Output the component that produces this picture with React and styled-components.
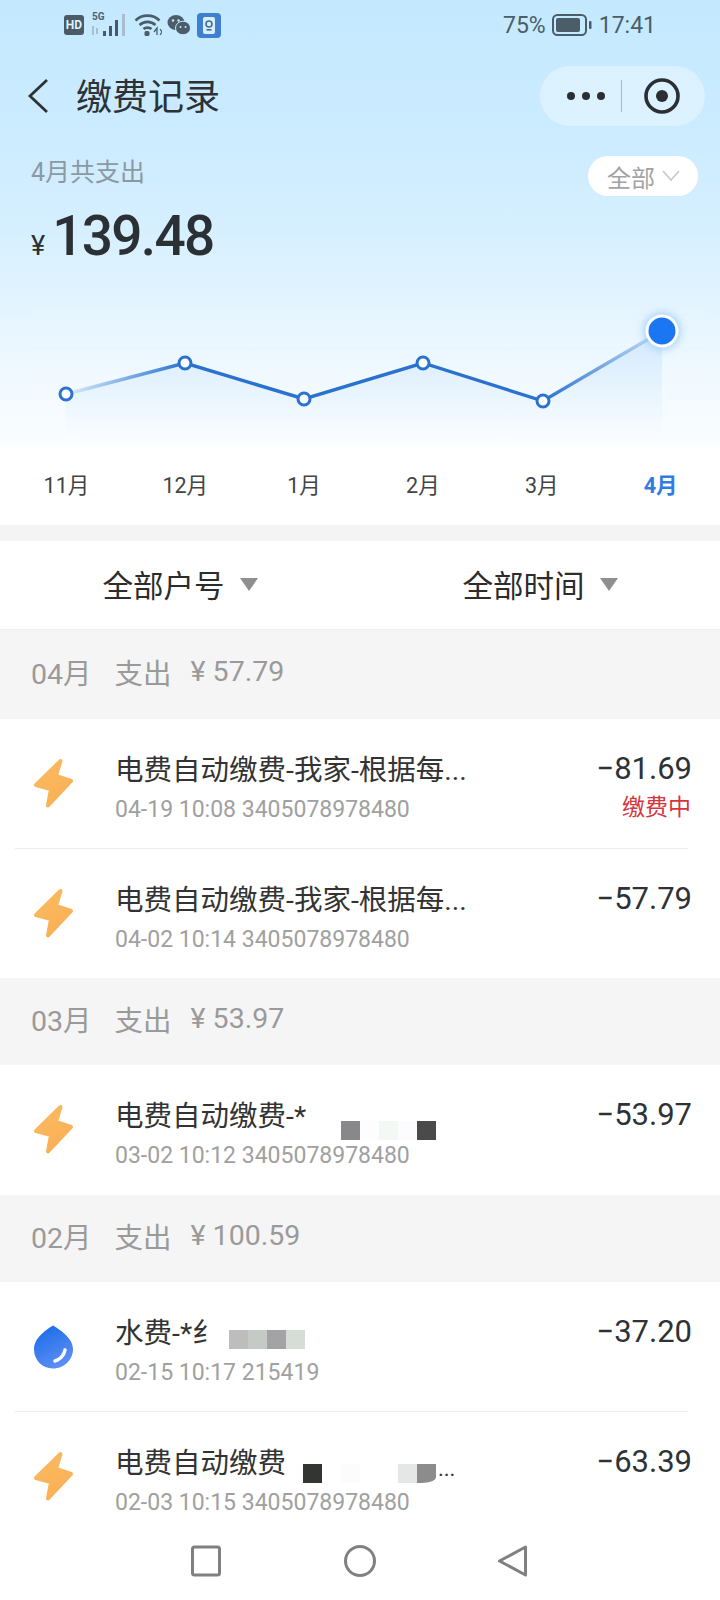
import styled, { createGlobalStyle } from "styled-components";

const GlobalStyle = createGlobalStyle`
  html, body {
    margin: 0;
    padding: 0;
    background: #fff;
  }
  * {
    box-sizing: border-box;
  }
`;

const FONT = `Roboto, "Noto Sans CJK SC", "Liberation Sans", sans-serif`;

const Page = styled.div`
  width: 720px;
  height: 1600px;
  overflow: hidden;
  display: flex;
  flex-direction: column;
  font-family: ${FONT};
  background: #fff;
`;
const Hero = styled.div`
  height: 447px;
  flex: none;
  background: linear-gradient(
    180deg,
    #c4e9ff 0%,
    #cbebff 28%,
    #d5efff 50%,
    #e3f4ff 68%,
    #f3faff 88%,
    #fbfdff 100%
  );
`;
const StatusBar = styled.div`
  height: 50px;
  display: flex;
  align-items: center;
  padding: 0 64px 0 64px;
  color: #4b5d69;
`;
const StatusIcons = styled.div`
  display: flex;
  align-items: center;
`;
const HdBadge = styled.div`
  width: 20px;
  height: 20px;
  border-radius: 3px;
  background: #4a5a66;
  color: #dff2ff;
  font-size: 12px;
  font-weight: 700;
  line-height: 20px;
  text-align: center;
`;
const Signal = styled.div`
  position: relative;
  width: 36px;
  height: 26px;
  margin-left: 8px;
`;
const FiveG = styled.span`
  position: absolute;
  left: 0;
  top: -1px;
  font-size: 10px;
  font-weight: 700;
  line-height: 12px;
  color: #4f6170;
`;
const StatusRight = styled.div`
  margin-left: auto;
  display: flex;
  align-items: center;
  gap: 6px;
  font-size: 23px;
`;
const TopBar = styled.div`
  height: 92px;
  display: flex;
  align-items: center;
  padding: 0 15px 0 27px;
`;
const PageTitle = styled.h1`
  margin: 0 0 4px 27px;
  font-size: 36px;
  font-weight: 400;
  color: #2c3237;
`;
const Capsule = styled.div`
  margin-left: auto;
  width: 165px;
  height: 60px;
  border-radius: 30px;
  background: rgba(255, 255, 255, 0.34);
  display: flex;
  align-items: center;
  padding-left: 27px;
`;
const Dots = styled.div`
  display: flex;
  gap: 7px;
`;
const Dot = styled.i`
  width: 8px;
  height: 8px;
  border-radius: 50%;
  background: #2b2f33;
`;
const CapsuleLine = styled.div`
  width: 1px;
  height: 32px;
  margin: 0 22px 0 16px;
  background: #a9bac5;
`;
const SummaryRow = styled.div`
  height: 54px;
  padding: 14px 22px 0 31px;
  display: flex;
  justify-content: space-between;
`;
const SummaryLabel = styled.div`
  font-size: 25px;
  line-height: 34px;
  color: #8c99a3;
`;
const FilterPill = styled.div`
  width: 110px;
  height: 40px;
  border-radius: 20px;
  background: #fff;
  display: flex;
  align-items: center;
  padding-left: 19px;
  gap: 7px;
  font-size: 24px;
  color: #a3a3a3;
`;
const Total = styled.div`
  height: 66px;
  padding: 13px 0 0 31px;
  display: flex;
  align-items: baseline;
  color: #2b3035;
`;
const Yen = styled.span`
  font-size: 27px;
  font-weight: 400;
  margin-right: 7px;
`;
const TotalValue = styled.span`
  font-size: 55px;
  line-height: 54px;
  font-weight: 500;
  letter-spacing: -1.7px;
`;
const Chart = styled.svg`
  display: block;
  width: 720px;
  height: 185px;
`;
const Months = styled.div`
  height: 78px;
  flex: none;
  display: flex;
  align-items: center;
  padding: 0 0 6px 7px;
`;
const Month = styled.div`
  width: 119px;
  text-align: center;
  font-size: 21.5px;
  font-weight: ${(p) => (p.$active ? 700 : 400)};
  color: ${(p) => (p.$active ? "#2f7de1" : "#444")};
`;
const Band = styled.div`
  height: 16px;
  flex: none;
  background: #f4f4f4;
`;
const Filters = styled.div`
  height: 89px;
  flex: none;
  display: grid;
  grid-template-columns: 1fr 1fr;
  border-bottom: 1px solid #eee;
`;
const FilterItem = styled.div`
  display: flex;
  align-items: center;
  justify-content: center;
  gap: 15px;
  padding-bottom: 2px;
  font-size: 30.5px;
  color: #2c2c2c;
`;
const Caret = styled.i`
  width: 0;
  height: 0;
  border-left: 9px solid transparent;
  border-right: 9px solid transparent;
  border-top: 13px solid #8f8f8f;
`;
const List = styled.div`
  flex: 1;
  min-height: 0;
  overflow: hidden;
`;
const MonthHeader = styled.div`
  height: ${(p) => p.$height}px;
  display: flex;
  align-items: center;
  padding: 0 0 6px 31px;
  background: #f5f5f5;
  color: #9a9a9a;
  font-size: 28.5px;
`;
const HeaderPart = styled.span`
  margin-right: ${(p) => p.$gap}px;
`;
const Row = styled.div`
  height: 129.5px;
  display: flex;
  padding: 0 28px 0 33px;
  position: relative;
  &::after {
    content: "";
    display: ${(p) => (p.$divider ? "block" : "none")};
    position: absolute;
    left: 15px;
    right: 32px;
    bottom: 0;
    height: 1px;
    background: #ececec;
  }
`;
const IconBox = styled.div`
  width: 41px;
  flex: none;
  padding-top: ${(p) => p.$top}px;
`;
const RowBody = styled.div`
  flex: 1;
  min-width: 0;
  padding: 32px 0 0 41px;
`;
const RowTitle = styled.div`
  display: flex;
  align-items: flex-end;
  height: 40px;
  font-size: 28.5px;
  line-height: 40px;
  color: #333;
  white-space: nowrap;
`;
const RowSub = styled.div`
  margin-top: 3px;
  font-size: 23px;
  line-height: 32px;
  color: #a0a0a0;
`;
const Mosaic = styled.div`
  display: flex;
  margin: 0 0 ${(p) => p.$lift}px ${(p) => p.$offset}px;
  & > i:last-child {
    border-bottom-right-radius: ${(p) => (p.$cut ? "14px 6px" : "0")};
  }
`;
const MosaicCell = styled.i`
  width: 19px;
  height: 19px;
  background: ${(p) => p.$color};
`;
const TrailingDots = styled.span`
  margin-left: 2px;
  font-size: 22px;
  line-height: 30px;
`;
const RowAmounts = styled.div`
  flex: none;
  padding-top: 28px;
  text-align: right;
`;
const Amount = styled.div`
  font-size: 31px;
  line-height: 44px;
  color: #2e3236;
`;
const Paying = styled.div`
  margin: 1px 1px 0 0;
  font-size: 23px;
  line-height: 32px;
  color: #d5353f;
`;
const NavBar = styled.div`
  height: 70px;
  flex: none;
  background: #fff;
  display: flex;
  align-items: flex-start;
  padding: 15px 0 0 191px;
`;
const NavIcon = styled.svg`
  display: block;
  margin-right: ${(p) => p.$gap}px;
`;

const points = [
  [66, 394],
  [185, 363],
  [304, 399],
  [423, 363],
  [543, 401],
];
const months = ["11月", "12月", "1月", "2月", "3月", "4月"];

const rows = {
  apr: [
    { id: 1, type: "bolt", title: "电费自动缴费-我家-根据每...", sub: "04-19 10:08 3405078978480", amount: "−81.69", paying: true, divider: true },
    { id: 2, type: "bolt", title: "电费自动缴费-我家-根据每...", sub: "04-02 10:14 3405078978480", amount: "−57.79" },
  ],
  mar: [
    {
      id: 3,
      type: "bolt",
      title: "电费自动缴费-*",
      sub: "03-02 10:12 3405078978480",
      amount: "−53.97",
      offset: 35,
      lift: -3,
      mosaic: ["#88878a", "#fdfdfd", "#f3f8f5", "#fcfbfd", "#4a4a4a"],
    },
  ],
  feb: [
    {
      id: 4,
      type: "drop",
      title: "水费-*纟",
      sub: "02-15 10:17 215419",
      amount: "−37.20",
      divider: true,
      offset: 8,
      lift: 5,
      mosaic: ["#bdbdbd", "#c6cac7", "#a3a2a4", "#d6dcd6"],
    },
    {
      id: 5,
      type: "bolt",
      title: "电费自动缴费",
      sub: "02-03 10:15 3405078978480",
      amount: "−63.39",
      offset: 17,
      lift: 1,
      mosaic: ["#333533", "#fff", "#fdfcfd", "#fff", "#fff", "#e4e7e5", "#8c8c8c"],
      more: true,
    },
  ],
};

function Bolt() {
  return (
    <svg width="41" height="50" viewBox="0 0 41 50">
      <defs>
        <linearGradient id="boltFill" x1="0" y1="0" x2="0.6" y2="1">
          <stop offset="0" stopColor="#f9bb62" />
          <stop offset="1" stopColor="#fbb055" />
        </linearGradient>
      </defs>
      <path
        d="M27.5 3 L3 27 L18 31 L15 47.5 L38 23 L23 18 Z"
        fill="url(#boltFill)"
        stroke="url(#boltFill)"
        strokeWidth="4"
        strokeLinejoin="round"
      />
    </svg>
  );
}

function Drop() {
  return (
    <svg width="41" height="44" viewBox="0 0 41 44">
      <defs>
        <linearGradient id="dropFill" x1="0.3" y1="0" x2="0.8" y2="1">
          <stop offset="0" stopColor="#1c6dea" />
          <stop offset="1" stopColor="#6491f6" />
        </linearGradient>
      </defs>
      <path
        d="M20 0.5 C24 3 40 12 40 24 C40 35 31 43.5 20 43.5 C9 43.5 1 35 1 24 C1 12 16 3 20 0.5 Z"
        fill="url(#dropFill)"
      />
      <path d="M22 36 C26 35 31 31 32 25" fill="none" stroke="#fff" strokeWidth="3.5" strokeLinecap="round" />
    </svg>
  );
}

function Section({ month, total, height, items }) {
  return (
    <>
      <MonthHeader $height={height}>
        <HeaderPart $gap={23}>{month}</HeaderPart>
        <HeaderPart $gap={19}>支出</HeaderPart>
        <span>¥ {total}</span>
      </MonthHeader>
      {items.map((item) => (
        <Row key={item.id} $divider={item.divider}>
          <IconBox $top={item.type === "bolt" ? 39 : 43}>{item.type === "bolt" ? <Bolt /> : <Drop />}</IconBox>
          <RowBody>
            <RowTitle>
              {item.title}
              {item.mosaic && (
                <Mosaic $offset={item.offset} $lift={item.lift} $cut={item.more}>
                  {item.mosaic.map((c, i) => (
                    <MosaicCell key={i} $color={c} />
                  ))}
                </Mosaic>
              )}
              {item.more && <TrailingDots>...</TrailingDots>}
            </RowTitle>
            <RowSub>{item.sub}</RowSub>
          </RowBody>
          <RowAmounts>
            <Amount>{item.amount}</Amount>
            {item.paying && <Paying>缴费中</Paying>}
          </RowAmounts>
        </Row>
      ))}
    </>
  );
}

export default function App() {
  return (
    <Page>
      <GlobalStyle />
      <Hero>
        <StatusBar>
          <StatusIcons>
            <HdBadge>HD</HdBadge>
            <Signal>
              <FiveG>5G</FiveG>
              <svg width="36" height="26" viewBox="0 0 36 26">
                <g fill="#a9bdca">
                  <rect x="0" y="14" width="2" height="9" />
                  <rect x="4" y="16" width="2" height="6" />
                  <rect x="30" y="2" width="3" height="22" />
                </g>
                <g fill="#46586a">
                  <rect x="11" y="19" width="3" height="5" />
                  <rect x="17" y="14" width="3" height="10" />
                  <rect x="23" y="8" width="3" height="16" />
                </g>
              </svg>
            </Signal>
            <svg width="28" height="24" viewBox="0 0 28 24" style={{ marginLeft: 6 }}>
              <g fill="none" stroke="#4b5d69" strokeWidth="2.6">
                <path d="M1.5 7.5 C8 1 19 1 25.5 7.5" />
                <path d="M5.5 12 C10 7.8 17 7.8 21.5 12" />
                <path d="M9.5 16 C11.5 14.2 15.5 14.2 17.5 16" />
              </g>
              <rect x="10.5" y="18" width="5" height="5" rx="1.5" fill="#4b5d69" />
              <path d="M20 19 L23 15 V22 M26 16 L28 19 L26 22" fill="none" stroke="#4b5d69" strokeWidth="1.3" />
            </svg>
            <svg width="24" height="22" viewBox="0 0 24 22" style={{ marginLeft: 5 }}>
              <ellipse cx="9" cy="8.5" rx="8.5" ry="7.5" fill="#4b5d69" />
              <ellipse cx="16" cy="14" rx="7.5" ry="6.8" fill="#4b5d69" stroke="#c6e9ff" strokeWidth="1" />
              <circle cx="6" cy="6.5" r="1.2" fill="#c6e9ff" />
              <circle cx="11.5" cy="6.5" r="1.2" fill="#c6e9ff" />
              <circle cx="13.5" cy="13" r="1" fill="#c6e9ff" />
              <circle cx="18.5" cy="13" r="1" fill="#c6e9ff" />
            </svg>
            <svg width="24" height="25" viewBox="0 0 24 25" style={{ marginLeft: 6 }}>
              <rect width="24" height="25" rx="4" fill="#3f7fd0" />
              <rect x="6" y="4" width="12" height="17" rx="2" fill="#dbeeff" />
              <circle cx="12" cy="11" r="3" fill="none" stroke="#3f6f9a" strokeWidth="1.6" />
              <rect x="9.5" y="16" width="5" height="1.6" fill="#3f6f9a" />
            </svg>
          </StatusIcons>
          <StatusRight>
            <span>75%</span>
            <svg width="41" height="22" viewBox="0 0 41 22">
              <rect x="1" y="1" width="33" height="20" rx="4.5" fill="none" stroke="#4b5d69" strokeWidth="2" />
              <rect x="4" y="4" width="24" height="14" rx="2" fill="#4b5d69" />
              <rect x="37" y="7" width="2.5" height="8" rx="1" fill="#4b5d69" />
            </svg>
            <span>17:41</span>
          </StatusRight>
        </StatusBar>
        <TopBar>
          <svg width="22" height="36" viewBox="0 0 22 36">
            <path d="M20 2 L3 18 L20 34" fill="none" stroke="#2c3237" strokeWidth="2.8" />
          </svg>
          <PageTitle>缴费记录</PageTitle>
          <Capsule>
            <Dots>
              <Dot />
              <Dot />
              <Dot />
            </Dots>
            <CapsuleLine />
            <svg width="36" height="36" viewBox="0 0 36 36">
              <circle cx="18" cy="18" r="16" fill="none" stroke="#2b2f33" strokeWidth="3.6" />
              <circle cx="18" cy="18" r="6" fill="#2b2f33" />
            </svg>
          </Capsule>
        </TopBar>
        <SummaryRow>
          <SummaryLabel>4月共支出</SummaryLabel>
          <FilterPill>
            全部
            <svg width="18" height="12" viewBox="0 0 18 12">
              <path d="M1 1 L9 10 L17 1" fill="none" stroke="#c4c9cd" strokeWidth="1.6" />
            </svg>
          </FilterPill>
        </SummaryRow>
        <Total>
          <Yen>¥</Yen>
          <TotalValue>139.48</TotalValue>
        </Total>
        <Chart viewBox="0 262 720 185">
          <defs>
            <linearGradient id="lineFade" gradientUnits="userSpaceOnUse" x1="66" y1="0" x2="662" y2="0">
              <stop offset="0" stopColor="#2a72cf" stopOpacity="0.08" />
              <stop offset="0.2" stopColor="#2a72cf" />
              <stop offset="0.8" stopColor="#2a72cf" />
              <stop offset="1" stopColor="#2a72cf" stopOpacity="0.15" />
            </linearGradient>
            <linearGradient id="areaFade" x1="0" y1="0" x2="0" y2="1">
              <stop offset="0" stopColor="#5aa9f5" stopOpacity="0.16" />
              <stop offset="1" stopColor="#5aa9f5" stopOpacity="0" />
            </linearGradient>
            <filter id="glow" x="-50%" y="-50%" width="200%" height="200%">
              <feGaussianBlur stdDeviation="4" />
            </filter>
          </defs>
          {[312, 345, 378, 410, 446].map((y) => (
            <line key={y} x1="32" x2="706" y1={y} y2={y} stroke="#fff" strokeOpacity="0.3" />
          ))}
          <path d="M66 394 L185 363 L304 399 L423 363 L543 401 L662 331 V440 H66 Z" fill="url(#areaFade)" />
          <path d="M66 394 L185 363 L304 399 L423 363 L543 401 L662 331" fill="none" stroke="url(#lineFade)" strokeWidth="3.4" />
          {points.map(([x, y]) => (
            <circle key={x} cx={x} cy={y} r="6" fill="#fff" stroke="#2a72cf" strokeWidth="3" />
          ))}
          <circle cx="662" cy="331" r="18" fill="#7fbdf5" opacity="0.7" filter="url(#glow)" />
          <circle cx="662" cy="331" r="16.5" fill="#fff" />
          <circle cx="662" cy="331" r="13.5" fill="#1a76f2" />
        </Chart>
      </Hero>
      <Months>
        {months.map((m) => (
          <Month key={m} $active={m === "4月"}>
            {m}
          </Month>
        ))}
      </Months>
      <Band />
      <Filters>
        <FilterItem>
          全部户号
          <Caret />
        </FilterItem>
        <FilterItem>
          全部时间
          <Caret />
        </FilterItem>
      </Filters>
      <List>
        <Section month="04月" total="57.79" height={89} items={rows.apr} />
        <Section month="03月" total="53.97" height={87} items={rows.mar} />
        <Section month="02月" total="100.59" height={87.5} items={rows.feb} />
      </List>
      <NavBar>
        <NavIcon width="30" height="32" viewBox="0 0 30 32" $gap={123}>
          <rect x="1.5" y="2" width="27" height="28" rx="2" fill="none" stroke="#808080" strokeWidth="3" />
        </NavIcon>
        <NavIcon width="32" height="32" viewBox="0 0 32 32" $gap={122}>
          <circle cx="16" cy="16" r="14.5" fill="none" stroke="#808080" strokeWidth="3" />
        </NavIcon>
        <NavIcon width="30" height="32" viewBox="0 0 30 32" $gap={0}>
          <path d="M27.5 2 L1.5 16 L27.5 30 Z" fill="none" stroke="#808080" strokeWidth="3" strokeLinejoin="round" />
        </NavIcon>
      </NavBar>
    </Page>
  );
}
